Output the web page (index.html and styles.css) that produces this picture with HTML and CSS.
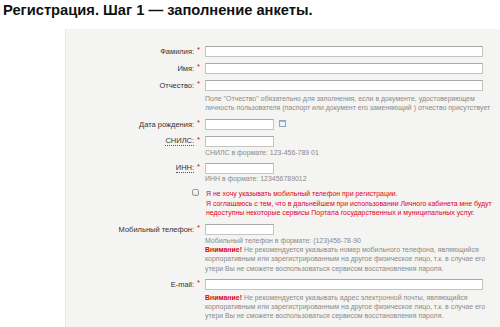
FILE: index.html
```html
<!DOCTYPE html>
<html lang="ru">
<head>
<meta charset="utf-8">
<link rel="stylesheet" href="styles.css">
</head>
<body>
<h1 class="title">Регистрация. Шаг 1 — заполнение анкеты.</h1>
<div class="panel">
  <div class="form">
    <div class="label"><span>Фамилия:</span><i class="star">*</i></div>
    <div class="field"><div class="input wide"></div></div>

    <div class="label"><span>Имя:</span><i class="star">*</i></div>
    <div class="field"><div class="input wide"></div></div>

    <div class="label"><span>Отчество:</span><i class="star">*</i></div>
    <div class="field">
      <div class="input wide"></div>
      <div class="hint hint-two">Поле "Отчество" обязательно для заполнения, если в документе, удостоверяющем<br>личность пользователя (паспорт или документ его заменяющий ) отчество присутствует</div>
    </div>

    <div class="label"><span>Дата рождения:</span><i class="star">*</i></div>
    <div class="field field-row">
      <div class="input short"></div>
      <svg class="cal" width="7" height="7" viewBox="0 0 7 7"><rect x="0.5" y="0.5" width="6" height="6" fill="#eef3f8" stroke="#8fa6c0"/><rect x="1" y="1" width="5" height="1" fill="#e8a0a8"/></svg>
    </div>

    <div class="label"><span class="abbr">СНИЛС:</span><i class="star">*</i></div>
    <div class="field">
      <div class="input short"></div>
      <div class="hint hint-one">СНИЛС в формате: 123-456-789 01</div>
    </div>

    <div class="label"><span class="abbr">ИНН:</span><i class="star">*</i></div>
    <div class="field">
      <div class="input short"></div>
      <div class="hint hint-one hint-tight">ИНН в формате: 123456789012</div>
    </div>

    <div class="label label-top"><span class="checkbox"></span></div>
    <div class="field">
      <div class="alert">Я не хочу указывать мобильный телефон при регистрации.<br>Я соглашаюсь с тем, что в дальнейшем при использовании Личного кабинета мне будут<br>недоступны некоторые сервисы Портала государственных и муниципальных услуг.</div>
    </div>

    <div class="label"><span>Мобильный телефон:</span><i class="star">*</i></div>
    <div class="field">
      <div class="input short"></div>
      <div class="hint hint-one">Мобильный телефон в формате: (123)456-78-90</div>
      <div class="hint warn"><b>Внимание!</b> Не рекомендуется указывать номер мобильного телефона, являющийся<br>корпоративным или зарегистрированным на другое физическое лицо, т.к. в случае его<br>утери Вы не сможете воспользоваться сервисом восстановления пароля.</div>
    </div>

    <div class="label"><span>E-mail:</span><i class="star">*</i></div>
    <div class="field">
      <div class="input wide"></div>
      <div class="hint warn warn-mail"><b>Внимание!</b> Не рекомендуется указывать адрес электронной почты, являющийся<br>корпоративным или зарегистрированным на другое физическое лицо, т.к. в случае его<br>утери Вы не сможете воспользоваться сервисом восстановления пароля.</div>
    </div>
  </div>
</div>
</body>
</html>
```
FILE: styles.css
```css
html, body {
  margin: 0;
  padding: 0;
  background: #ffffff;
  font-family: "Liberation Sans", Arial, sans-serif;
  overflow: hidden;
}
.title {
  margin: 0;
  padding: 3px 0 0 3px;
  height: 29px;
  box-sizing: border-box;
  font-size: 14.7px;
  line-height: 14px;
  font-weight: bold;
  color: #111;
}
.panel {
  margin-left: 65px;
  background: #f4f4f2;
  border-left: 1px solid #e9e9e4;
  padding-top: 17px;
  min-height: 320px;
}
.form {
  display: grid;
  grid-template-columns: 134px 278px;
  column-gap: 5px;
  row-gap: 6px;
  align-items: start;
}
.label {
  display: flex;
  justify-content: flex-end;
  align-items: center;
  height: 11px;
  font-size: 7.5px;
  color: #333;
  white-space: nowrap;
}
.label-top {
  height: auto;
  padding-top: 0;
}
.abbr {
  border-bottom: 1px dotted #555;
  line-height: 8px;
}
.star {
  font-style: normal;
  color: #e2001a;
  margin-left: 3px;
  font-size: 7.5px;
  align-self: flex-start;
  line-height: 7px;
}
.field {
  display: flex;
  flex-direction: column;
  align-items: flex-start;
}
.field-row {
  flex-direction: row;
  align-items: flex-start;
}
.input {
  height: 11px;
  box-sizing: border-box;
  background: #fff;
  border: 1px solid #c4c4c4;
  border-top-color: #a9a9a9;
}
.wide { width: 278px; }
.short { width: 69px; }
.cal {
  margin: 1px 0 0 5px;
  display: block;
}
.hint {
  font-size: 6.95px;
  line-height: 9px;
  color: #8a8a8a;
  white-space: nowrap;
}
.hint-two {
  margin-top: 3px;
  padding-bottom: 1px;
}
.hint-one {
  margin-top: 1px;
}
.hint-tight {
  margin-top: 0;
}
.checkbox {
  display: block;
  width: 7px;
  height: 7px;
  box-sizing: border-box;
  margin-top: 0;
  margin-right: 1px;
  border: 1px solid #9a9a9a;
  border-radius: 2px;
  background: linear-gradient(#fdfdfd, #e4e4e4);
}
.alert {
  margin-left: 1px;
  font-size: 6.95px;
  line-height: 9.5px;
  color: #e2001a;
  white-space: nowrap;
}
.warn {
  line-height: 9.5px;
}
.warn b {
  color: #e2001a;
}
.warn-mail {
  margin-top: 3px;
  line-height: 9px;
}
```
